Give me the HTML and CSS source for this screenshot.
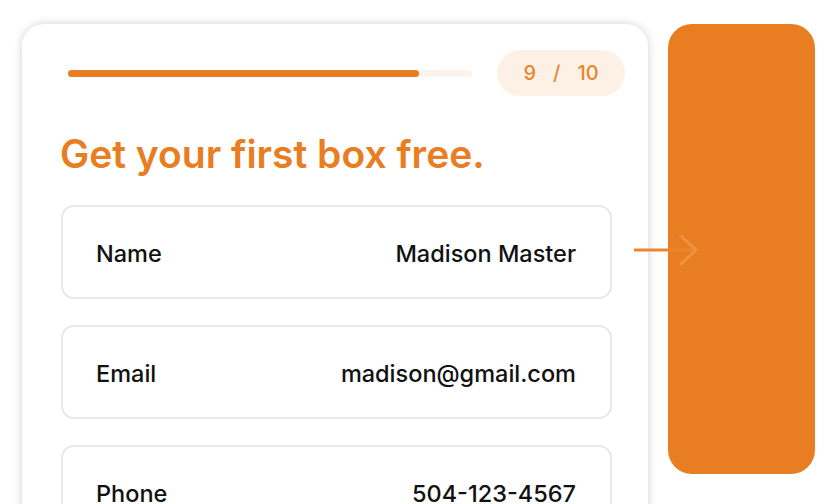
FILE: index.html
```html
<!DOCTYPE html>
<html>
<head>
<meta charset="utf-8">
<link rel="stylesheet" href="styles.css">
</head>
<body>
<div class="stage">
  <div class="card">
    <div class="progress-row">
      <div class="track"><div class="fill" style="width:87%"></div></div>
      <div class="pill"><span>9</span><span>/</span><span>10</span></div>
    </div>
    <h1 class="title">Get your first box free.</h1>
    <div class="fields">
      <div class="field"><span class="label">Name</span><span class="value">Madison Master</span></div>
      <div class="field"><span class="label">Email</span><span class="value">madison@gmail.com</span></div>
      <div class="field"><span class="label">Phone</span><span class="value">504-123-4567</span></div>
    </div>
  </div>
  <div class="panel"></div>
  <svg class="arrow" width="70" height="34" viewBox="0 0 70 34">
    <line x1="0" y1="17" x2="62" y2="17" stroke="#ec8430" stroke-width="3"/>
    <polyline points="47,3 62,17 47,31" fill="none" stroke="#ee9245" stroke-width="3" stroke-linecap="round" stroke-linejoin="round"/>
  </svg>
</div>
</body>
</html>
```
FILE: styles.css
```css
html, body {
  margin: 0;
  padding: 0;
  background: #ffffff;
  overflow: hidden;
}
.stage {
  position: relative;
  width: 837px;
  height: 504px;
  display: flex;
  align-items: flex-start;
  gap: 20px;
  padding: 24px 0 0 22px;
  box-sizing: border-box;
  font-family: Inter, "Noto Sans", sans-serif;
}
.card {
  width: 626px;
  height: 540px;
  flex: none;
  background: #ffffff;
  border-radius: 22px;
  box-shadow: 0 0 10px rgba(0,0,0,0.18);
  padding: 26px 23px 0 38px;
  box-sizing: border-box;
}
.progress-row {
  display: flex;
  align-items: center;
  gap: 25px;
  padding-left: 8px;
}
.track {
  flex: 1;
  height: 7px;
  border-radius: 4px;
  background: #fcf4ec;
}
.fill {
  height: 100%;
  border-radius: 4px;
  background: #e87d22;
}
.pill {
  width: 128px;
  height: 46px;
  border-radius: 23px;
  background: #fdf1e6;
  color: #e8862f;
  display: flex;
  align-items: center;
  justify-content: center;
  gap: 17px;
  font-size: 20px;
  font-weight: 500;
}
.title {
  margin: 30px 0 0 0;
  color: #e87d22;
  font-size: 39px;
  font-weight: 600;
  letter-spacing: 0;
  line-height: 56px;
}
.fields {
  display: flex;
  flex-direction: column;
  gap: 26px;
  margin-top: 23px;
  padding-left: 1px;
}
.field {
  width: 551px;
  height: 94px;
  box-sizing: border-box;
  border: 2px solid #e8e8e8;
  border-radius: 13px;
  display: flex;
  align-items: center;
  justify-content: space-between;
  padding: 3px 34px 0 33px;
  font-size: 23.5px;
  font-weight: 500;
  color: #111111;
}
.value {
  letter-spacing: 0;
}
.panel {
  width: 147px;
  height: 450px;
  flex: none;
  background: #e87d22;
  border-radius: 24px;
}
.arrow {
  position: absolute;
  left: 634px;
  top: 233px;
}
```
